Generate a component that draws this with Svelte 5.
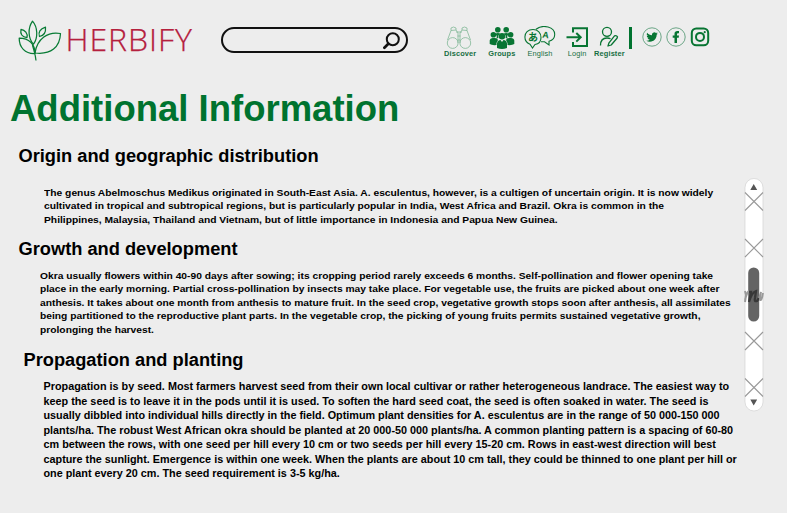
<script>
  const sections = [
    {
      id: 'origin', title: 'Origin and geographic distribution',
      lines: [
        'The genus Abelmoschus Medikus originated in South-East Asia. A. esculentus, however, is a cultigen of uncertain origin. It is now widely',
        'cultivated in tropical and subtropical regions, but is particularly popular in India, West Africa and Brazil. Okra is common in the',
        'Philippines, Malaysia, Thailand and Vietnam, but of little importance in Indonesia and Papua New Guinea.'
      ]
    },
    {
      id: 'growth', title: 'Growth and development',
      lines: [
        'Okra usually flowers within 40-90 days after sowing; its cropping period rarely exceeds 6 months. Self-pollination and flower opening take',
        'place in the early morning. Partial cross-pollination by insects may take place. For vegetable use, the fruits are picked about one week after',
        'anthesis. It takes about one month from anthesis to mature fruit. In the seed crop, vegetative growth stops soon after anthesis, all assimilates',
        'being partitioned to the reproductive plant parts. In the vegetable crop, the picking of young fruits permits sustained vegetative growth,',
        'prolonging the harvest.'
      ]
    },
    {
      id: 'planting', title: 'Propagation and planting',
      lines: [
        'Propagation is by seed. Most farmers harvest seed from their own local cultivar or rather heterogeneous landrace. The easiest way to',
        'keep the seed is to leave it in the pods until it is used. To soften the hard seed coat, the seed is often soaked in water. The seed is',
        'usually dibbled into individual hills directly in the field. Optimum plant densities for A. esculentus are in the range of 50 000-150 000',
        'plants/ha. The robust West African okra should be planted at 20 000-50 000 plants/ha. A common planting pattern is a spacing of 60-80',
        'cm between the rows, with one seed per hill every 10 cm or two seeds per hill every 15-20 cm. Rows in east-west direction will best',
        'capture the sunlight. Emergence is within one week. When the plants are about 10 cm tall, they could be thinned to one plant per hill or',
        'one plant every 20 cm. The seed requirement is 3-5 kg/ha.'
      ]
    }
  ];
  const crosses = [23.5, 70, 163, 209.5];
</script>

<div class="page">
  <header>
    <div class="brand">
      <svg class="leaf" width="44" height="42" viewBox="0 0 44 42" fill="none" stroke="#087b35" stroke-width="1.25" stroke-linejoin="round">
        <path d="M14.500 1.200C9.800 8 9.800 18 15.500 24.200C20 18 20 7.500 14.500 1.200Z" />
        <path d="M3 9.300C2 14 4 17 9 17.600C10 13.500 7 10 3 9.300Z" />
        <path d="M27.500 7.200C22 9 20 12 21.500 16.500C26 15.500 28 12 27.500 7.200Z" />
        <path d="M1.200 18C1 27 7 34 17 33.500C17 24 11 18 1.200 18Z" />
        <path d="M42.500 13.500C30 11 19 19 17 33C33 35 42 27 42.500 13.500Z" />
        <path d="M14.500 25C16 31 17.500 35 18 40.500" />
      </svg>
      <span class="name">HERBIFY</span>
    </div>

    <div class="search">
      <svg width="18" height="18" viewBox="0 0 18 18" fill="none" stroke="#111">
        <circle cx="9.800" cy="7.300" r="6" stroke-width="2" />
        <path d="M5.300 11.800L1.400 15.700" stroke-width="2.700" stroke-linecap="round" />
      </svg>
    </div>

    <nav>
      <a class="discover">
        <svg width="26" height="24" viewBox="0 0 26 24" fill="none" stroke="#82b897" stroke-width=".8">
          <circle cx="6.700" cy="17" r="5.400" /><circle cx="19.300" cy="17" r="5.400" />
          <path d="M1.500 14L5 4.500V2Q7.500 0 10 2V4L12 7V17M24.500 14L21 4.500V2Q18.500 0 16 2V4L14 7V17M5 4.500L10 4M16 4L21 4.500M10 6H16M11.500 10H14.500M11.800 14H14.200" />
        </svg><b>Discover</b>
      </a>
      <a class="groups">
        <svg width="26" height="24" viewBox="0 0 26 24" fill="#087533">
          <circle cx="8.800" cy="3.800" r="2.800" /><circle cx="17.200" cy="3.800" r="2.800" />
          <circle cx="4.400" cy="8.800" r="2.800" /><circle cx="21.600" cy="8.800" r="2.800" />
          <circle cx="13" cy="10.200" r="3.200" />
          <path d="M6 8Q8.500 6 11.500 7.700Q8.500 9 9.500 12L7.500 12.500Q8.500 9.500 6 8ZM20 8Q17.500 6 14.500 7.700Q17.500 9 16.500 12L18.500 12.500Q17.500 9.500 20 8Z" />
          <path d="M.7 18V14.500Q1 12 4 12H6Q8.500 12 9 14L7.500 17V19Q3 19.500 .7 18ZM25.300 18V14.500Q25 12 22 12H20Q17.500 12 17 14L18.500 17V19Q23 19.500 25.300 18ZM8 22V17.500Q8.500 14 11.500 14L13 16L14.500 14Q17.500 14 18 17.500V22Q13 24 8 22Z" />
        </svg><b>Groups</b>
      </a>
      <a class="english">
        <svg width="32" height="24" viewBox="0 0 32 24" fill="none" stroke="#087533" stroke-width="1.100">
          <path d="M9 3.500C4 3.500 .9 6.800 .9 11C.9 14 3 17 6 18.200L8.500 22L11 18.500C15 18 17 15 17 11.500C17 7 14 3.500 9 3.500Z" />
          <path d="M12 3.200C15 .8 20 0 24 1C28 2 30.700 5 30.700 8.500C30.700 12 28 14.500 25 15.300V19L20.500 15.800H17" />
          <text class="jp" x="4" y="14.800">あ</text><text class="latin" x="18.300" y="11.800" transform="rotate(8 21 9)">A</text>
        </svg><span>English</span>
      </a>
      <a class="login">
        <svg width="23" height="24" viewBox="0 0 23 24" fill="none" stroke="#087533" stroke-width="2">
          <path d="M7 6.500V2.200H21V20H7V16M.5 11.300H14.500M10.300 7L14.700 11.300L10.300 15.600" />
        </svg><span>Login</span>
      </a>
      <a class="register">
        <svg width="22" height="24" viewBox="0 0 22 24" fill="none" stroke="#087533" stroke-width="1.300" stroke-linejoin="round">
          <circle cx="9" cy="5.800" r="4.500" />
          <path d="M2.500 19.500C2.500 14.500 5 12 9 12Q11 12 12.500 12.800M10 20L11 16.800L16.500 9.800Q18.500 9 19.500 10.800L19 12.300L13.200 19L10 20Z" />
        </svg><b>Register</b>
      </a>
    </nav>
    <i class="divider"></i>
    <div class="social">
      <svg width="20" height="20" viewBox="0 0 20 20">
        <circle cx="10" cy="10" r="9.200" fill="none" stroke="#34875a" stroke-width=".7" />
        <path transform="translate(4.300 4.300) scale(.48)" fill="#087533" d="M23.950 4.570a10 10 0 01-2.820.77 4.950 4.950 0 002.160-2.720c-.95.550-2 .950-3.130 1.180a4.920 4.920 0 00-8.380 4.480C7.690 8.100 4.070 6.130 1.640 3.160a4.920 4.920 0 001.520 6.570 4.900 4.900 0 01-2.230-.61v.06a4.920 4.920 0 003.950 4.830 5 5 0 01-2.210.08 4.940 4.940 0 004.600 3.420A9.870 9.870 0 010 19.540a14 14 0 007.550 2.210c9.050 0 14-7.500 14-13.980l-.02-.64a10 10 0 002.420-2.560z" />
      </svg>
      <svg width="20" height="20" viewBox="0 0 20 20">
        <circle cx="10" cy="10" r="9.200" fill="none" stroke="#34875a" stroke-width=".7" />
        <path fill="#087533" d="M8.500 16V10.800H6.700V8.500H8.500V6.800C8.500 4.800 9.700 3.900 11.300 3.900L13 4V6.200H11.900Q11 6.200 11 7.200V8.500H13L12.700 10.800H11V16Z" />
      </svg>
      <svg width="20" height="20" viewBox="0 0 20 20" fill="none" stroke="#087533" stroke-width="2">
        <rect x="1.800" y="1.500" width="16.400" height="16.800" rx="4.500" /><circle cx="10" cy="9.900" r="4" />
        <circle cx="14.700" cy="5.200" r="1.100" fill="#087533" stroke="none" />
      </svg>
    </div>
  </header>

  <main>
    <article>
      <h1>Additional Information</h1>
      {#each sections as section}
        <section class={section.id}>
          <h2>{section.title}</h2>
          <p>{#each section.lines as line}<span>{line}</span>{/each}</p>
        </section>
      {/each}
    </article>
    <aside>
      <svg width="20" height="234" viewBox="0 0 20 234">
        <rect x="1" y=".5" width="18" height="232.500" rx="9" fill="#fff" stroke="#d3d3d3" stroke-width=".7" />
        {#each crosses as y}
          <path d="M1 {y - 9}L19 {y + 9}M19 {y - 9}L1 {y + 9}" stroke="#999" stroke-width="1.100" />
        {/each}
        <path d="M6.300 12L9.700 6L13.200 12ZM6.300 221.500L9.700 227.500L13.200 221.500Z" fill="#555" />
        <rect x="4.200" y="89.500" width="11" height="54" rx="5.500" fill="#646464" />
        <path d="M1 113L2 117L1 124M1 122Q3 114 5 113" fill="none" stroke="#999" stroke-width="2" />
        <path d="M5 114L7 114L5 124Q8 114 12 113L11 120Q10 124 13 123L15 120" fill="none" stroke="#383838" stroke-width="2.300" />
        <path d="M15 120L17 114L16 122Q18 123 19 115" fill="none" stroke="#999" stroke-width="1.800" />
      </svg>
    </aside>
  </main>
</div>

<style>
  :global(body) { margin: 0; background: #ededed; }
  .page { width: 787px; height: 513px; overflow: hidden; background: #ededed; font-family: "Liberation Sans", Arial, sans-serif; color: #000; }
  header { display: flex; height: 78px; align-items: flex-start; }
  svg { display: block; flex: none; }
  .brand { display: flex; width: 221px; padding: 20px 0 0 17.500px; box-sizing: border-box; flex: none; }
  .name { font: 300 32px/40px "Open Sans", sans-serif; letter-spacing: .95px; color: #b5203e; margin: -1px 0 0 4px; -webkit-text-stroke: .25px #b5203e; white-space: nowrap; }
  .search { width: 187px; height: 26px; margin-top: 27px; border: 2px solid #111; border-radius: 13px; box-sizing: border-box; display: flex; justify-content: flex-end; padding: 3px 5px 0; flex: none; }
  nav { display: flex; padding-top: 26px; margin-left: 36px; width: 183px; flex: none; }
  nav a { display: flex; flex-direction: column; align-items: center; flex: none; font-size: 6.500px; line-height: 8px; letter-spacing: .1px; color: #176f43; white-space: nowrap; }
  nav a :is(b, span) { transform: scaleX(1.140); }
  .discover { width: 32px; }
  .discover svg { margin-left: -3px; }
  .groups { width: 28px; margin-left: 12px; }
  .english { width: 32px; margin-left: 8px; }
  .login { width: 24px; margin-left: 9px; }
  .register { width: 30px; margin-left: 5px; }
  .jp { font: 700 10px "Noto Sans CJK JP", sans-serif; fill: #087533; stroke: none; letter-spacing: 0; }
  .latin { font: 700 9px "Liberation Sans", sans-serif; fill: #087533; stroke: none; letter-spacing: 0; }
  .divider { width: 3px; height: 22px; background: #00732f; margin: 27px 0 0 2px; flex: none; }
  .social { display: flex; gap: 4px; margin: 27px 0 0 9.500px; }
  main { display: flex; }
  article { width: 744px; flex: none; }
  h1 { margin: 10px 0 -1px 10px; font-size: 36.500px; line-height: 42px; color: #00732f; white-space: nowrap; }
  h2 { margin: 0 0 0 18.500px; font-size: 18.250px; line-height: 22px; white-space: nowrap; }
  p { margin: 0; font-weight: 700; }
  p span { display: block; white-space: nowrap; }
  .origin { height: 93px; padding-top: 16px; box-sizing: border-box; }
  .origin p { margin: 18.500px 0 0 43.500px; font-size: 9.400px; line-height: 13.500px; transform: scaleX(1.096); transform-origin: 0 0; }
  .growth { height: 111px; padding-top: 16px; box-sizing: border-box; }
  .growth p { margin: 8.500px 0 0 40px; font-size: 9.400px; line-height: 13.600px; transform: scaleX(1.094); transform-origin: 0 0; }
  .planting { padding-top: 16px; }
  .planting h2 { margin-left: 23.500px; }
  .planting p { margin: 8px 0 0 43.500px; font-size: 10.820px; line-height: 14.500px; }
  aside { margin-top: 100px; }
</style>
